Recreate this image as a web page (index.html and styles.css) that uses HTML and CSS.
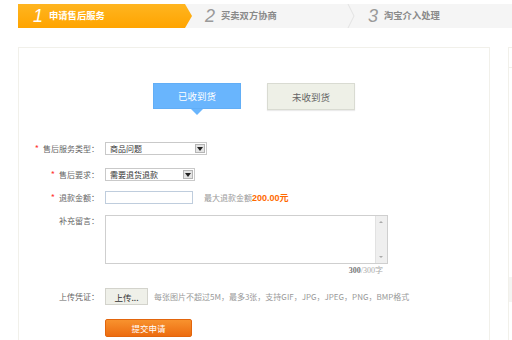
FILE: index.html
```html
<!DOCTYPE html>
<html lang="zh-CN">
<head>
<meta charset="utf-8">
<title>申请售后服务</title>
<link rel="stylesheet" href="styles.css">
</head>
<body>
<div class="page">
  <div class="steps">
    <div class="step step-active"><span class="num">1</span><span class="stxt">申请售后服务</span></div>
    <div class="step step-2"><span class="num">2</span><span class="stxt">买卖双方协商</span>
      <svg class="chev" viewBox="0 0 8 24" width="8" height="24"><polyline points="1,0 7,12 1,24" fill="none" stroke="#e2e2e2" stroke-width="1"/></svg>
    </div>
    <div class="step step-3"><span class="num">3</span><span class="stxt">淘宝介入处理</span></div>
  </div>

  <div class="main">
    <div class="panel">
      <div class="toggle">
        <div class="tbtn tbtn-on">已收到货</div>
        <div class="tbtn tbtn-off">未收到货</div>
      </div>

      <div class="form">
        <div class="row r1">
          <div class="lbl"><span class="star">*</span>售后服务类型：</div>
          <div class="select sel-1"><span class="sel-txt">商品问题</span><span class="sel-btn"><svg viewBox="0 0 6 4" width="6" height="4"><polygon points="0,0 6,0 3,4" fill="#222"/></svg></span></div>
        </div>
        <div class="row r2">
          <div class="lbl"><span class="star">*</span>售后要求：</div>
          <div class="select sel-2"><span class="sel-txt">需要退货退款</span><span class="sel-btn"><svg viewBox="0 0 6 4" width="6" height="4"><polygon points="0,0 6,0 3,4" fill="#222"/></svg></span></div>
        </div>
        <div class="row r3">
          <div class="lbl"><span class="star">*</span>退款金额：</div>
          <div class="input"></div>
          <div class="hint hint-money">最大退款金额<span class="money">200.00元</span></div>
        </div>
        <div class="row r4">
          <div class="lbl lbl-top">补充留言：</div>
          <div class="textarea">
            <div class="scroll"><span class="sc-up"></span><span class="sc-down"></span></div>
          </div>
        </div>
        <div class="count"><b>300</b>/300字</div>
        <div class="row r5">
          <div class="lbl">上传凭证：</div>
          <div class="upload">上传...</div>
          <div class="hint hint-up">每张图片不超过5M，最多3张，支持GIF，JPG，JPEG，PNG，BMP格式</div>
        </div>
        <div class="row r6">
          <div class="submit">提交申请</div>
        </div>
      </div>
    </div>

    <div class="side">
      <div class="side-head"></div>
      <div class="side-body"></div>
      <div class="side-foot"></div>
    </div>
  </div>
</div>
</body>
</html>
```

FILE: styles.css
```css
html, body {
  margin: 0;
  padding: 0;
}
body {
  width: 512px;
  height: 340px;
  overflow: hidden;
  background: #fff;
  font-family: "Noto Sans CJK SC", "Liberation Sans", sans-serif;
  font-size: 8px;
  color: #666;
}
.page {
  width: 494px;
  height: 336px;
  overflow: hidden;
  padding: 4px 0 0 18px;
}

/* steps */
.steps {
  display: flex;
  height: 24px;
  background: #f5f5f5;
}
.step {
  position: relative;
  display: flex;
  align-items: center;
  box-sizing: border-box;
  height: 24px;
}
.step-active {
  width: 174px;
  padding-left: 15px;
  background: linear-gradient(#ffb520, #ffa400);
  clip-path: polygon(0 0, 167px 0, 174px 50%, 167px 100%, 0 100%);
  color: #fff;
}
.step-2 {
  width: 162px;
  padding-left: 13px;
}
.step-3 {
  flex: 1;
  padding-left: 14px;
}
.num {
  font-family: "Liberation Sans", sans-serif;
  font-style: italic;
  font-size: 18px;
  line-height: 1;
  margin-right: 6px;
}
.stxt {
  font-size: 9.3px;
  font-weight: bold;
  line-height: 1;
}
.step-2 .num, .step-3 .num { color: #9a9a9a; }
.step-2 .stxt, .step-3 .stxt { color: #8a8a8a; }
.chev {
  position: absolute;
  right: -1px;
  top: 0;
}

/* layout */
.main {
  display: flex;
  gap: 18px;
  margin-top: 19px;
}
.panel {
  flex: none;
  width: 472px;
  height: 310px;
  border: 1px solid #f1f0ea;
  box-sizing: border-box;
}
.side {
  flex: none;
  width: 200px;
  height: 310px;
  border: 1px solid #f1f0ea;
  box-sizing: border-box;
}
.side-head {
  height: 19px;
  border-bottom: 1px solid #f1f0ea;
}
.side-body {
  height: 209px;
}
.side-foot {
  height: 25px;
  background: #f4f4f2;
}

/* toggle */
.toggle {
  display: flex;
  justify-content: center;
  align-items: flex-start;
  gap: 26px;
  margin-top: 35px;
}
.tbtn {
  width: 88px;
  display: flex;
  align-items: center;
  justify-content: center;
  box-sizing: border-box;
  font-size: 9.5px;
}
.tbtn-on {
  position: relative;
  height: 26px;
  background: #69b5fd;
  color: #fff;
  border: 1px solid #62aef6;
}
.tbtn-on::after {
  content: "";
  position: absolute;
  left: 50%;
  bottom: -7px;
  margin-left: -6px;
  border-left: 6px solid transparent;
  border-right: 6px solid transparent;
  border-top: 6px solid #69b5fd;
}
.tbtn-off {
  height: 27px;
  background: #eef0e7;
  border: 1px solid #d9dbd2;
  color: #666;
  box-shadow: 0 1px 1px rgba(0, 0, 0, 0.08);
}

/* form */
.form {
  margin-top: 32px;
}
.row {
  display: flex;
  align-items: center;
}
.lbl {
  width: 80px;
  margin-right: 6px;
  text-align: right;
  line-height: 10px;
  color: #666;
  white-space: nowrap;
}
.lbl-top {
  align-self: flex-start;
  padding-top: 1px;
}
.star {
  color: #f33;
  font-size: 9px;
  margin-right: 4px;
}
.r2 { margin-top: 13px; }
.r3 { margin-top: 10px; }
.r4 { margin-top: 11px; }
.r5 { margin-top: 12px; }
.r6 { margin-top: 14px; padding-left: 86px; }

.select {
  display: flex;
  align-items: center;
  height: 13px;
  box-sizing: border-box;
  border: 1px solid #c9c9c9;
  background: #fff;
  padding-left: 4px;
}
.sel-1 { width: 102px; }
.sel-2 { width: 90px; }
.sel-txt {
  flex: 1;
  color: #333;
  line-height: 10px;
}
.sel-btn {
  display: flex;
  align-items: center;
  justify-content: center;
  width: 10px;
  height: 9px;
  margin-right: 1px;
  background: #e4e4e4;
  border: 1px solid #b5b5b5;
  box-sizing: border-box;
}

.input {
  width: 88px;
  height: 13px;
  box-sizing: border-box;
  border: 1px solid #bfcddd;
  background: #fff;
}
.hint {
  color: #999;
  line-height: 10px;
  white-space: nowrap;
}
.hint-money { margin-left: 11px; }
.money {
  color: #ff6a00;
  font-weight: bold;
  font-family: "Liberation Sans", "Noto Sans CJK SC", sans-serif;
  font-size: 9px;
}

.textarea {
  display: flex;
  justify-content: flex-end;
  width: 283px;
  height: 49px;
  box-sizing: border-box;
  border: 1px solid #cfcfcf;
  background: #fff;
}
.scroll {
  position: relative;
  width: 11px;
  background: #efefef;
  border-left: 1px solid #e2e2e2;
}
.sc-up, .sc-down {
  position: absolute;
  left: 3px;
  border-left: 2px solid transparent;
  border-right: 2px solid transparent;
}
.sc-up {
  top: 5px;
  border-bottom: 2px solid #aaa;
}
.sc-down {
  bottom: 5px;
  border-top: 2px solid #aaa;
}

.count {
  width: 278px;
  margin-left: 86px;
  margin-top: 2px;
  text-align: right;
  line-height: 10px;
  color: #aaa;
  font-family: "Liberation Serif", "Noto Sans CJK SC", serif;
  font-size: 8px;
}
.count b {
  color: #777;
}

.upload {
  display: flex;
  align-items: center;
  justify-content: center;
  width: 43px;
  height: 17px;
  box-sizing: border-box;
  background: #eff0e9;
  border: 1px solid #d3d3cc;
  color: #333;
  font-size: 8.5px;
}
.hint-up { margin-left: 6px; }

.submit {
  display: flex;
  align-items: center;
  justify-content: center;
  width: 87px;
  height: 18px;
  box-sizing: border-box;
  background: linear-gradient(#f8922e, #ec6c10);
  border: 1px solid #e2650c;
  border-radius: 2px;
  color: #fff;
  font-size: 8.5px;
}
```
